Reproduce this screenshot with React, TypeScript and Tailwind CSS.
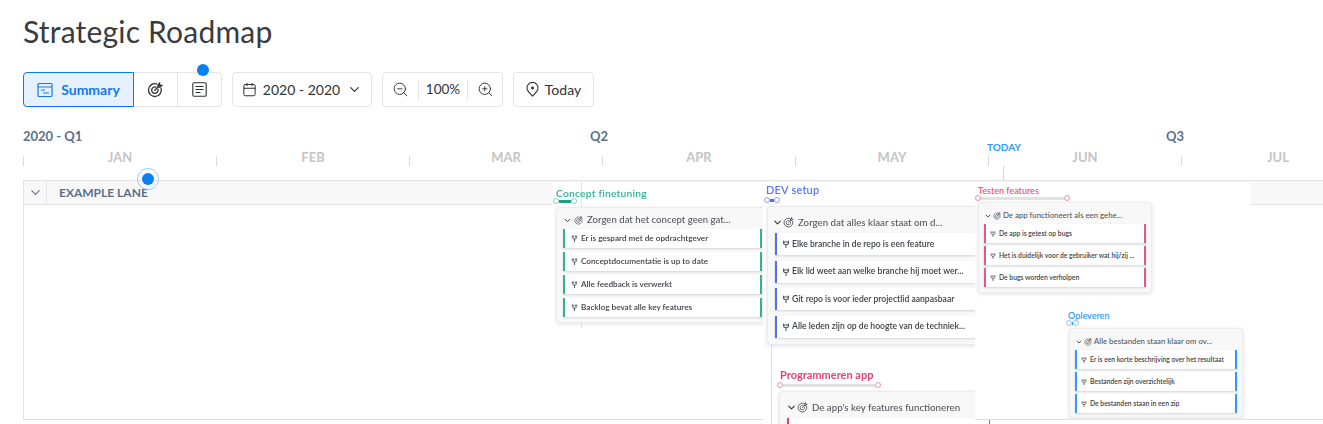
import { Calendar, ChevronDown, ZoomIn, ZoomOut } from "lucide-react"

type Scale = "lg" | "md" | "sm"

const months = ["JAN", "FEB", "MAR", "APR", "MAY", "JUN", "JUL"]

const scales = {
  lg: {
    card: "px-[7px] pt-[6px]",
    head: "h-[18px] text-[9.7px]",
    headIcon: 11,
    chevron: "-ml-[3px]",
    target: "mr-[4px]",
    list: "mt-[2px] gap-[5.5px]",
    row: "h-[22px] gap-[2px] pl-[5px] text-[8.6px]",
    keyIcon: 8,
  },
  md: {
    card: "px-[6px] pt-[5px]",
    head: "h-[14px] text-[9.6px]",
    headIcon: 9,
    chevron: "mr-[1.5px]",
    target: "mr-[4.5px]",
    list: "mt-[2px] gap-[4px]",
    row: "h-[19px] gap-[3.5px] pl-[5.5px] text-[8.2px]",
    keyIcon: 7,
  },
  sm: {
    card: "px-[5px] pt-[6px]",
    head: "h-[14px] text-[7.8px]",
    headIcon: 8,
    chevron: "mr-px",
    target: "mr-[2px]",
    list: "mt-px gap-[3px]",
    row: "h-[19px] gap-[3px] pl-[4px] text-[6.75px]",
    keyIcon: 6,
  },
}

function TargetIcon({ size }: { size: number }) {
  return (
    <svg width={size} height={size} viewBox="0 0 16 16" fill="none" stroke="currentColor" strokeWidth="1.3" strokeLinecap="round" className="shrink-0">
      <path d="M9.5 1.9A6.4 6.4 0 1 0 14.1 6.5" />
      <path d="M8.8 5.1A3.2 3.2 0 1 0 10.9 7.2" />
      <path d="M7.8 8.2 12 4M11 2.8V5h2.2l1.6-1.6h-2.2V1.2Z" />
    </svg>
  )
}

function KeyIcon({ size }: { size: number }) {
  return (
    <svg width={size} height={size} viewBox="0 0 8 8" fill="none" stroke="#55585e" strokeWidth="1.1" strokeLinecap="round" className="shrink-0">
      <path d="M1.5 1v1.8C1.5 4 2.6 4.7 4 4.7S6.5 4 6.5 2.8V1M4 4.7V7.6M3 1.2 3 2.4M5 1.2V2.4" />
    </svg>
  )
}

function ObjectiveCard({ scale, className, headClass = "", objective, items, bar, both }: { scale: Scale; className: string; headClass?: string; objective: string; items: string[]; bar: string; both: boolean }) {
  const s = scales[scale]
  return (
    <div className={`rounded-sm border border-[#ececec] bg-[#f8f8f8] shadow-[0_1px_4px_rgba(0,0,0,0.12)] ${s.card} ${className}`}>
      <div className={`flex items-center whitespace-nowrap text-[#55585e] ${s.head} ${headClass}`}>
        <ChevronDown size={s.headIcon} strokeWidth={2.5} className={`shrink-0 text-[#33363b] ${s.chevron}`} />
        <div className={s.target}>
          <TargetIcon size={s.headIcon} />
        </div>
        <span className="font-medium">{objective}</span>
      </div>
      <div className={`flex flex-col ${s.list}`}>
        {items.map((item, i) => (
          <div
            key={i}
            className={`flex shrink-0 items-center whitespace-nowrap border-l-2 bg-white font-semibold text-[#3f4247] shadow-[0_1px_2px_rgba(0,0,0,0.14)] ${bar} ${both ? "border-r-2" : ""} ${s.row}`}
          >
            <KeyIcon size={s.keyIcon} />
            <span>{item}</span>
          </div>
        ))}
      </div>
    </div>
  )
}

// the two little circles with the bar between them, under each item name
function DateBar({ width, track, handle }: { width: string; track: string; handle: string }) {
  return (
    <div className={`flex h-[6px] items-center ${width}`}>
      <div className={`h-[6px] w-[6px] shrink-0 rounded-full border bg-white ${handle}`} />
      <div className={`h-[3px] flex-1 ${track}`} />
      <div className={`h-[6px] w-[6px] shrink-0 rounded-full border bg-white ${handle}`} />
    </div>
  )
}

export default function App() {
  return (
    <div className="relative h-[424px] w-[1323px] overflow-hidden bg-white font-['Lato',sans-serif] text-[#2f3136]">
      <h1 className="pl-[23px] pt-[12px] text-[30px] font-normal leading-[38px] tracking-[0.2px] text-[#3a3b3f]">Strategic Roadmap</h1>

      <div className="ml-[23px] mt-[22px] flex h-[35px] gap-[10px] text-[14px]">
        <div className="relative flex w-[199px] rounded border border-[#e5e5e5]">
          <button className="-m-px flex w-[111px] shrink-0 items-center justify-center gap-[8px] rounded-l border border-[#0a78f0] bg-[#e5f1fd] font-bold text-[#1678ee]">
            <svg width="16" height="16" viewBox="0 0 16 16" fill="none" stroke="currentColor" strokeWidth="1.2">
              <rect x="1" y="1.5" width="14" height="13" rx="1" />
              <path d="M1 5h14M4 8h4M6 11h6" />
            </svg>
            Summary
          </button>
          <div className="flex w-[45px] items-center justify-center border-r border-[#e5e5e5]">
            <TargetIcon size={16} />
          </div>
          <div className="flex flex-1 items-center justify-center">
            <svg width="15" height="15" viewBox="0 0 15 15" fill="none" stroke="currentColor" strokeWidth="1.1">
              <rect x="0.8" y="0.8" width="13.4" height="13.4" rx="1.2" />
              <path d="M3.5 4.5h8M3.5 7.5h8M3.5 10.5h5" />
            </svg>
          </div>
          <div className="absolute left-[173px] top-[-9px] h-3 w-3 rounded-full bg-[#0a80f5]" />
        </div>

        <div className="flex w-[140px] items-center justify-center gap-[6px] rounded border border-[#e5e5e5]">
          <Calendar size={15} strokeWidth={1.6} />
          <span>2020 - 2020</span>
          <ChevronDown size={15} strokeWidth={1.9} className="ml-[1px]" />
        </div>

        <div className="flex w-[121px] items-center rounded border border-[#e5e5e5]">
          <div className="flex w-[35px] justify-center">
            <ZoomOut size={17} strokeWidth={1.3} />
          </div>
          <div className="flex h-[20px] w-[50px] items-center justify-center border-x border-[#e5e5e5] text-[13.5px]">100%</div>
          <div className="flex w-[34px] justify-center">
            <ZoomIn size={17} strokeWidth={1.3} />
          </div>
        </div>

        <div className="flex w-[81px] items-center justify-center gap-[6px] rounded border border-[#e5e5e5]">
          <svg width="13" height="15" viewBox="0 0 14 16" fill="none" stroke="currentColor" strokeWidth="1.2">
            <path d="M7 15C4 12.2 1 9.6 1 6.4a6 6 0 0 1 12 0C13 9.6 10 12.2 7 15Z" />
            <circle cx="7" cy="6.5" r="1" fill="currentColor" />
          </svg>
          Today
        </div>
      </div>

      <div className="mt-[21px] flex pl-[23px] text-[13px] font-bold leading-4 text-[#5d6f89]">
        <div className="w-[567px]">2020 - Q1</div>
        <div className="w-[576px]">Q2</div>
        <div>Q3</div>
      </div>

      <div className="mt-[12px] flex h-[10px] pl-[23px]">
        {months.map((m) => (
          <div key={m} className="flex w-[193px] shrink-0 items-center justify-center border-l border-[#dcdcdc] pb-[6px] text-[13px] font-bold text-[#c5c5c5]">
            {m}
          </div>
        ))}
      </div>

      <div className="ml-[23px] mt-[14px] h-[240px] w-[1320px] border border-[#e2e2e2]">
        <div className="flex h-[24px] border-b border-[#e2e2e2] bg-[#f8f8f8]">
          <div className="flex w-[23px] items-center justify-center border-r border-[#e6e6e6] text-[#5d6f89]">
            <ChevronDown size={15} strokeWidth={1.7} />
          </div>
          <div className="pl-[12px] text-[12px] font-bold leading-[24px] text-[#5d6f89]">EXAMPLE LANE</div>
        </div>
      </div>

      {/* markers over the timeline */}
      <div className="absolute left-[987px] top-[141px] text-[10px] font-bold leading-3 text-[#2f9bff]">TODAY</div>
      <div className="absolute left-[1003px] top-[166px] h-[14px] w-px bg-[#bcdcff]" />
      <div className="absolute left-[137px] top-[168px] flex h-[22px] w-[22px] items-center justify-center rounded-full border border-[#9bcbff]">
        <div className="h-3 w-3 rounded-full bg-[#0a80f5]" />
      </div>

      {/* roadmap items, one white panel per column */}
      <div className="absolute left-[552px] top-[182px] flex items-start blur-[0.3px]">
        <div className="relative h-[237px] w-[211px] overflow-hidden bg-white pl-px pt-[5px]">
          <div className="absolute left-[29px] top-0 h-[146px] w-px bg-[#d5e8fb]" />
          <div className="relative">
            <div className="ml-[3px] h-[11px] text-[10.3px] font-semibold leading-3 tracking-[0.2px] text-[#2fb39b]">Concept finetuning</div>
            <DateBar width="w-[24px]" track="bg-[#1f9e87]" handle="border-[#7fd0c2]" />
            <ObjectiveCard
              scale="md"
              className="ml-[3px] mt-[3px] h-[116px] w-[213px]"
              bar="border-[#2fb39b]"
              both
              objective="Zorgen dat het concept geen gat..."
              items={["Er is gespard met de opdrachtgever", "Conceptdocumentatie is up to date", "Alle feedback is verwerkt", "Backlog bevat alle key features"]}
            />
          </div>
        </div>

        <div className="relative h-[242px] w-[212px] overflow-hidden bg-white pt-[2px]">
          <div className="absolute left-[8px] top-[163px] h-[79px] w-px bg-[#cfe4fb]" />
          <div className="relative ml-px">
            <div className="ml-[2px] h-[13px] text-[11px] font-semibold leading-3 tracking-[0.2px] text-[#5a78f5]">DEV setup</div>
            <DateBar width="w-[16px]" track="bg-[#4f6ff5]" handle="border-[#8ea3f8]" />
            <ObjectiveCard
              scale="lg"
              className="ml-[3px] mt-[3px] h-[139px] w-[220px]"
              bar="border-[#4f6ff5]"
              both={false}
              objective="Zorgen dat alles klaar staat om d..."
              items={["Elke branche in de repo is een feature", "Elk lid weet aan welke branche hij moet wer...", "Git repo is voor ieder projectlid aanpasbaar", "Alle leden zijn op de hoogte van de techniek..."]}
            />
          </div>
          <div className="relative ml-[14px] mt-[24px]">
            <div className="ml-[3px] h-[13px] text-[11px] font-bold leading-3 text-[#e8407c]">Programmeren app</div>
            <DateBar width="w-[104px]" track="bg-[#e2e2e2]" handle="border-[#f08fb2]" />
            <ObjectiveCard
              scale="lg"
              className="ml-[2px] mt-[3px] h-[60px] w-[220px]"
              headClass="pl-[2px]"
              bar="border-[#e8407c]"
              both={false}
              objective="De app's key features functioneren"
              items={[""]}
            />
          </div>
        </div>

        <div className="h-[237px] w-[275px] overflow-hidden bg-white pt-[2px]">
          <div>
            <div className="ml-[3px] mt-px h-[10px] text-[9px] font-semibold leading-3 text-[#e8558c]">Testen features</div>
            <DateBar width="w-[95px]" track="bg-[#e2e2e2]" handle="border-[#f08fb2]" />
            <ObjectiveCard
              scale="sm"
              className="ml-[3px] mt-px h-[91px] w-[174px]"
              bar="border-[#e8558c]"
              both
              objective="De app functioneert als een gehe..."
              items={["De app is getest op bugs", "Het is duidelijk voor de gebruiker wat hij/zij ...", "De bugs worden verholpen"]}
            />
          </div>
          <div className="ml-[91px] mt-[17px]">
            <div className="ml-[2px] h-[10px] text-[9px] font-semibold leading-3 text-[#2f9bff]">Opleveren</div>
            <DateBar width="w-[13px]" track="bg-[#2f9bff]" handle="border-[#8cc6ff]" />
            <ObjectiveCard
              scale="sm"
              className="ml-[3px] mt-[2px] h-[90px] w-[174px]"
              bar="border-[#2f9bff]"
              both
              objective="Alle bestanden staan klaar om ov..."
              items={["Er is een korte beschrijving over het resultaat", "Bestanden zijn overzichtelijk", "De bestanden staan in een zip"]}
            />
          </div>
        </div>
      </div>
      <div className="absolute left-[989px] top-[420px] h-[4px] w-px bg-[#e8407c]" />
    </div>
  )
}
